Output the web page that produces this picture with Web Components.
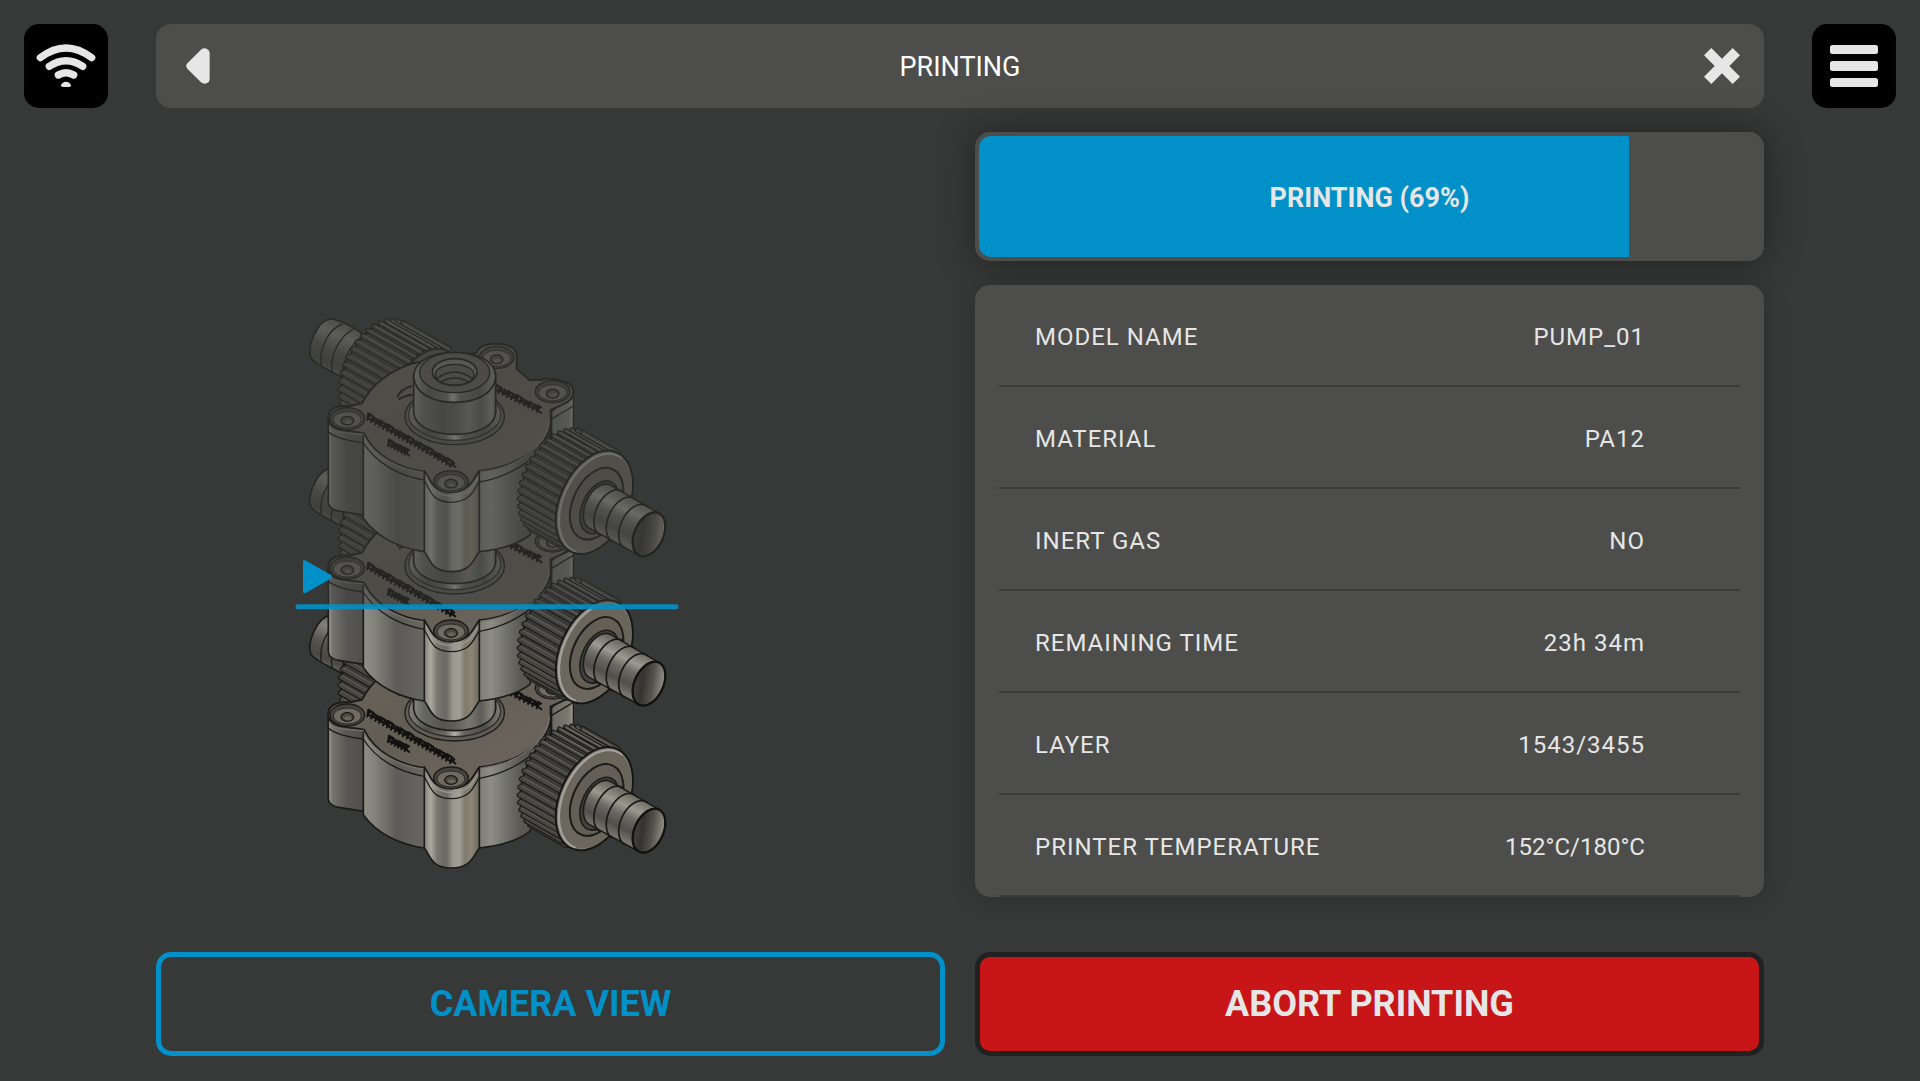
<!DOCTYPE html>
<html lang="en">
<head>
<meta charset="utf-8">
<title>Printing</title>
<style>
  :root {
    --bg: #373938;
    --panel: #4d4d4b;
    --line: #3a3b3a;
    --accent: #0191c8;
    --danger: #c81618;
    --text: #e6e6e6;
    --radius: 15px;
  }
  body { margin: 0; background: var(--bg); color: var(--text); font-family: Roboto, "Liberation Sans", sans-serif; }
</style>
</head>
<body>
<printer-screen>
  <icon-tile slot="left" label="Wi-Fi">
    <svg width="84" height="84" viewBox="0 0 252 252" fill="none" stroke="#e6e6e6" stroke-linecap="round">
      <path d="M49 101Q126 43 203 101" stroke-width="22"/>
      <path d="M76 127Q126 93 176 127" stroke-width="22"/>
      <path d="M103 153Q126 139 149 153" stroke-width="22"/>
      <path d="M111 184q4-11 15-11t15 11q0 5-6 5h-18q-6 0-6-5z" fill="#e6e6e6" stroke="none"/>
    </svg>
  </icon-tile>
  <title-bar slot="title">PRINTING</title-bar>
  <icon-tile slot="right" label="Menu">
    <svg width="84" height="84" viewBox="0 0 84 84" fill="#e6e6e6">
      <rect x="18" y="21" width="48" height="9" rx="2.5"/>
      <rect x="18" y="37" width="48" height="10" rx="2.5"/>
      <rect x="18" y="54" width="48" height="9" rx="2.5"/>
    </svg>
  </icon-tile>
  <model-preview slot="preview"></model-preview>
  <print-progress slot="status" value="69" fill="83.2">PRINTING (69%)</print-progress>
  <info-panel slot="status">
    <info-row label="MODEL NAME">PUMP_01</info-row>
    <info-row label="MATERIAL">PA12</info-row>
    <info-row label="INERT GAS">NO</info-row>
    <info-row label="REMAINING TIME">23h 34m</info-row>
    <info-row label="LAYER">1543/3455</info-row>
    <info-row label="PRINTER TEMPERATURE" compact>152°C/180°C</info-row>
  </info-panel>
  <action-button slot="actions" kind="outline">CAMERA VIEW</action-button>
  <action-button slot="actions" kind="danger">ABORT PRINTING</action-button>
</printer-screen>

<script>
const define = (name, html, setup) => {
  const template = document.createElement('template');
  template.innerHTML = html;
  customElements.define(name, class extends HTMLElement {
    constructor() {
      super();
      this.attachShadow({ mode: 'open' }).append(template.content.cloneNode(true));
    }
    connectedCallback() { if (setup) setup(this, this.shadowRoot); }
  });
};

define('printer-screen', `
  <style>
    :host { display: block; min-height: 100vh; box-sizing: border-box; padding: 24px; }
    header { display: grid; grid-template-columns: 84px 1fr 84px; column-gap: 48px; }
    main { display: grid; grid-template-columns: 1fr 1fr; column-gap: 30px; margin: 24px 132px 0; }
    .status { display: flex; flex-direction: column; gap: 24px; }
    .actions { grid-column: 1 / -1; display: grid; grid-template-columns: 1fr 1fr; column-gap: 30px; margin-top: 55px; }
  </style>
  <header><slot name="left"></slot><slot name="title"></slot><slot name="right"></slot></header>
  <main>
    <slot name="preview"></slot>
    <div class="status"><slot name="status"></slot></div>
    <div class="actions"><slot name="actions"></slot></div>
  </main>`);

define('icon-tile', `
  <style>
    :host { display: block; }
    button { display: block; width: 84px; height: 84px; padding: 0; border: 0; border-radius: var(--radius); background: #000; overflow: hidden; cursor: pointer; }
    ::slotted(svg) { display: block; }
  </style>
  <button type="button"><slot></slot></button>`,
  (el, root) => root.querySelector('button').setAttribute('aria-label', el.getAttribute('label')));

define('title-bar', `
  <style>
    :host { display: flex; align-items: center; justify-content: space-between; height: 84px; box-sizing: border-box; padding: 0 24px; border-radius: var(--radius); background: var(--panel); }
    h1 { margin: 0; padding-top: 2px; font-size: 27px; line-height: 32px; font-weight: 400; color: #fff; }
    button { display: block; width: 36px; height: 36px; padding: 0; border: 0; background: none; cursor: pointer; }
    svg { display: block; }
  </style>
  <button type="button" aria-label="Back"><svg width="36" height="36" viewBox="0 0 108 108" fill="#e6e6e6"><path d="M22 46L63 5Q71-2 80 2Q89 6 89 14V94Q89 102 80 106Q71 110 63 103L22 62Q15 54 22 46Z"/></svg></button>
  <h1><slot></slot></h1>
  <button type="button" aria-label="Close"><svg width="36" height="36" viewBox="0 0 108 108" fill="#e6e6e6"><path d="M22 0L54 32L86 0L108 22L76 54L108 86L86 108L54 76L22 108L0 86L32 54L0 22Z"/></svg></button>`);

define('print-progress', `
  <style>
    :host { display: grid; height: 129px; box-sizing: border-box; padding: 4px; border-radius: var(--radius); background: var(--panel); box-shadow: 0 0 36px rgba(0,0,0,.42); }
    .bar, .label { grid-area: 1 / 1; }
    .bar { border-radius: 12px 0 0 12px; background: var(--accent); }
    .label { place-self: center; padding-top: 2px; font-size: 27px; line-height: 32px; font-weight: 700; }
  </style>
  <div class="bar" role="progressbar" aria-label="Print progress" aria-valuemin="0" aria-valuemax="100"></div>
  <div class="label"><slot></slot></div>`,
  (el, root) => {
    const bar = root.querySelector('.bar');
    bar.setAttribute('aria-valuenow', el.getAttribute('value'));
    bar.style.width = el.getAttribute('fill') + '%';
  });

define('info-panel', `
  <style>
    :host { display: block; padding: 0 24px; border-radius: var(--radius); background: var(--panel); box-shadow: 0 0 24px rgba(0,0,0,.2); }
  </style>
  <slot></slot>`);

define('info-row', `
  <style>
    :host { display: block; }
    dl { display: flex; align-items: center; justify-content: space-between; height: 102px; box-sizing: border-box; margin: 0; padding: 4px 95px 0 36px; border-bottom: 2px solid var(--line); font-size: 24px; line-height: 28px; letter-spacing: 1px; }
    dd { margin: 0; }
    :host([compact]) dd { letter-spacing: normal; }
  </style>
  <dl><dt></dt><dd><slot></slot></dd></dl>`,
  (el, root) => { root.querySelector('dt').textContent = el.getAttribute('label'); });

define('action-button', `
  <style>
    :host { display: block; }
    button { display: block; width: 100%; height: 104px; padding: 0; border: 5px solid var(--accent); border-radius: var(--radius); background: none; color: var(--accent); font: 700 36px/42px Roboto, "Liberation Sans", sans-serif; cursor: pointer; }
    :host([kind=danger]) button { border-color: #212121; background: var(--danger); color: var(--text); }
  </style>
  <button type="button"><slot></slot></button>`);

/* ---- isometric pump drawing ---- */
const U = [0.4226, -0.9063], V = [0.9063, 0.4226];
const onRing = (cx, cy, a, b, deg) => {
  const t = deg * Math.PI / 180, p = a * Math.cos(t), q = b * Math.sin(t);
  return [cx + p * U[0] + q * V[0], cy + p * U[1] + q * V[1]];
};
const arc = (cx, cy, a, b, from, to) => {
  const pts = [];
  for (let i = 0; i <= 32; i++) pts.push(onRing(cx, cy, a, b, from + (to - from) * i / 32).map(n => n.toFixed(1)).join(' '));
  return pts.join('L');
};
const ring = (cx, cy, a, b, attrs) => `<ellipse cx="${cx}" cy="${cy}" rx="${a}" ry="${b}" transform="rotate(-65 ${cx} ${cy})" ${attrs}/>`;
/* ribbed coupling nut: front ring centre, sweep vector to the back ring */
const nut = (cx, cy, dx, dy) => {
  const a = 163, b = 101;
  let s = `<path d="M${arc(cx, cy, a, b, 4, -176)}L${arc(cx + dx, cy + dy, a, b, -176, 4)}Z" fill="#3b3a36" stroke="#151513" stroke-width="5" stroke-linejoin="round"/>`;
  for (let t = -174; t <= 2; t += 9) {
    const [x, y] = onRing(cx, cy, a + 3, b + 3, t + 4), [x2, y2] = onRing(cx, cy, a, b, t + 6);
    const lit = t > -75 ? '#6b6962' : '#605e58';
    s += `<path d="M${x} ${y}l${dx} ${dy}" stroke="#171715" stroke-width="15" stroke-linecap="round"/>`;
    s += `<path d="M${x} ${y}l${dx} ${dy}" stroke="#484640" stroke-width="9" stroke-linecap="round"/>`;
    s += `<path d="M${x2} ${y2}l${dx} ${dy}" stroke="${lit}" stroke-width="4" stroke-linecap="round"/>`;
  }
  return s;
};
const bolt = (x, y) => `
  <ellipse cx="${x}" cy="${y}" rx="52" ry="33" fill="#45433d" stroke="#1b1b19" stroke-width="4"/>
  <ellipse cx="${x}" cy="${y + 3}" rx="42" ry="24" fill="#6f6b60" stroke="#2b2a27" stroke-width="3"/>
  <ellipse cx="${x}" cy="${y + 6}" rx="19" ry="13" fill="#4c4a43" stroke="#191917" stroke-width="4"/>
  <ellipse cx="${x + 2}" cy="${y + 10}" rx="11" ry="6" fill="#68655c"/>`;
/* raised lettering reads as a dark ragged texture at this size */
const emboss = (x1, y1, x2, y2, n) => {
  let d = '';
  for (let i = 0; i < n; i++) {
    const x = x1 + (x2 - x1) * i / (n - 1), y = y1 + (y2 - y1) * i / (n - 1), k = (i * 7) % 5;
    d += `M${x - 8} ${y + 10}l${3 + k}-${20 - k}l${10 - k} ${6 + k}l-${9 - k} 4M${x - 3} ${y + 6 - k}l${9 + k} 7`;
  }
  return `<path d="${d}" fill="none" stroke="#11110f" stroke-width="6" stroke-linejoin="round" stroke-linecap="round"/>`;
};
const pump = `
  <g stroke-linejoin="round">
    <!-- rear hose tail -->
    <path d="M62 172C50 140 82 60 122 57C150 58 190 82 225 106L164 236C130 215 75 195 62 172Z" fill="url(#rearHose)" stroke="#1b1b19" stroke-width="5"/>
    <path d="M94 196C86 150 112 88 158 72M126 218C118 170 145 112 192 86M160 234C152 190 180 130 224 104" fill="none" stroke="#1b1b19" stroke-width="4"/>
    ${nut(405, 295, -138, -78)}
    ${ring(405, 295, 156, 96, 'fill="#57544d" stroke="#1b1b19" stroke-width="4"')}
    ${ring(412, 300, 132, 78, 'fill="#615d54" stroke="#1b1b19" stroke-width="4"')}
    ${ring(420, 306, 118, 66, 'fill="#45433e" stroke="#1b1b19" stroke-width="4"')}
    <!-- right rear leg -->
    <path d="M785 335L850 275V420L785 450Z" fill="url(#rearLeg)" stroke="#1b1b19" stroke-width="4"/>
    <path d="M785 357L850 318" stroke="#1b1b19" stroke-width="4"/>
    <!-- left leg -->
    <path d="M115 350V608Q118 630 150 634L222 645V400Z" fill="url(#leftLeg)" stroke="#1b1b19" stroke-width="5"/>
    <!-- drum -->
    <path d="M220 400V655C260 712 330 745 403 755H568C620 750 680 735 720 705L782 440V345Z" fill="url(#drum)" stroke="#1b1b19" stroke-width="5"/>
    <!-- lid skirt -->
    <path d="M115 358V395Q140 418 220 428C260 492 330 528 403 540M568 546C660 530 760 470 782 398" fill="none" stroke="#1b1b19" stroke-width="4"/>
    <!-- lid -->
    <path d="M115 352C116 326 140 316 180 318L216 310C240 262 290 216 368 190L560 158C566 138 592 131 622 131C656 132 678 145 680 166V206L718 240H752C775 231 850 240 850 272C850 300 838 306 782 330V360C785 430 690 500 568 513C550 535 545 572 483 574C425 572 424 545 403 515C330 506 255 470 222 400L170 392C140 390 114 382 115 352Z" fill="url(#lid)" stroke="#1b1b19" stroke-width="6"/>
    <path d="M222 400C255 462 330 500 403 508M568 506C690 492 770 430 778 350M121 372C135 392 180 388 222 394" fill="none" stroke="#77746a" stroke-width="4" transform="translate(0 10)"/>
    <path d="M322 292Q330 268 366 258M326 298Q345 286 368 284" fill="none" stroke="#1b1b19" stroke-width="6"/>
    ${bolt(620, 172)}${bolt(788, 275)}${bolt(172, 356)}
    ${emboss(240, 350, 488, 490, 22)}${emboss(302, 428, 352, 454, 6)}${emboss(620, 262, 748, 326, 11)}
    <!-- front leg -->
    <path d="M403 512V755C420 775 422 815 483 815C545 815 548 780 568 755V512C550 535 545 574 483 576C425 574 424 545 403 512Z" fill="url(#leg)" stroke="#1b1b19" stroke-width="5"/>
    <path d="M403 542C424 575 425 605 483 607C545 605 550 570 568 544" fill="none" stroke="#1b1b19" stroke-width="4"/>
    <path d="M408 530C426 560 428 586 483 588C540 586 548 558 564 532" fill="none" stroke="#9a9890" stroke-width="4"/>
    ${bolt(483, 545)}
    <!-- spout -->
    <ellipse cx="494" cy="349" rx="149" ry="85" fill="#5f5c55" stroke="#1b1b19" stroke-width="4"/>
    <ellipse cx="494" cy="344" rx="138" ry="77" fill="url(#flange)" stroke="#2c2b28" stroke-width="4"/>
    <path d="M371 220V338C375 380 430 403 494 403S613 380 617 338V220Z" fill="url(#spout)" stroke="#1b1b19" stroke-width="5"/>
    <path d="M371 230C372 180 430 157 494 157S616 180 617 230C614 280 560 307 494 307S374 280 371 230Z" fill="url(#cap)" stroke="#1b1b19" stroke-width="5"/>
    <ellipse cx="494" cy="218" rx="105" ry="60" fill="#605d56" stroke="#1b1b19" stroke-width="4"/>
    <ellipse cx="494" cy="216" rx="67" ry="40" fill="#77756e" stroke="#1b1b19" stroke-width="5"/>
    <ellipse cx="494" cy="224" rx="58" ry="31" fill="#5d5b54" stroke="#1b1b19" stroke-width="4"/>
    <path d="M440 236Q494 196 548 236M452 246Q494 222 536 246" fill="none" stroke="#1b1b19" stroke-width="4"/>
    <!-- front coupling -->
    ${nut(913, 607, -108, -61)}
    ${ring(913, 607, 164, 102, 'fill="#77756e" stroke="#151513" stroke-width="6"')}
    <path d="M${arc(916, 609, 156, 96, 10, -185)}" fill="none" stroke="#a3a19a" stroke-width="7"/>
    ${ring(918, 610, 154, 94, 'fill="url(#face)"')}
    ${ring(920, 611, 114, 71, 'fill="#645f56" stroke="#1b1b19" stroke-width="6"')}
    ${ring(928, 622, 84, 51, 'fill="#45433e" stroke="#1b1b19" stroke-width="5"')}
    <path d="M${arc(930, 620, 72, 44, 5, -175)}L${arc(1077, 703, 70, 43, -175, 5)}Z" fill="url(#hose)" stroke="#1b1b19" stroke-width="5"/>
    <path d="M${arc(963, 639, 74, 45, 8, -178)}M${arc(1000, 660, 73, 45, 8, -178)}M${arc(1037, 681, 72, 45, 8, -178)}" fill="none" stroke="#171715" stroke-width="5"/>
    ${ring(1077, 703, 70, 43, 'fill="url(#bore)" stroke="#11110f" stroke-width="7"')}
  </g>`;
const stops = list => list.map(([o, c]) => `<stop offset="${o}" stop-color="${c}"/>`).join('');
const flat = (id, x1, x2, list) => `<linearGradient id="${id}" gradientUnits="userSpaceOnUse" x1="${x1}" x2="${x2}" y1="0" y2="0">${stops(list)}</linearGradient>`;

define('model-preview', `
  <style>
    :host { display: flex; align-items: flex-end; box-sizing: border-box; padding: 0 0 27px 134px; }
    svg { display: block; width: 390px; height: 570px; }
  </style>
  <svg viewBox="0 0 1170 1710" role="img" aria-label="Three stacked pump models with the current layer marked">
    <defs>
      ${flat('drum', 220, 782, [[0, '#8f8e86'], [.06, '#83827b'], [.18, '#5c5b57'], [.33, '#686762'], [.62, '#7d7d77'], [.68, '#8d8d86'], [.76, '#73736d'], [.84, '#5a5954'], [1, '#504f4a']])}
      ${flat('leg', 403, 568, [[0, '#85847d'], [.12, '#aaa89f'], [.24, '#77766f'], [.4, '#696863'], [.52, '#99988f'], [.64, '#a19f95'], [.74, '#7f7a6d'], [.86, '#8d8475'], [1, '#6e6a60']])}
      ${flat('leftLeg', 115, 222, [[0, '#a09f97'], [.12, '#74736d'], [.5, '#595854'], [1, '#4f4e4a']])}
      ${flat('rearLeg', 785, 850, [[0, '#6b6a63'], [.8, '#7b7971'], [1, '#a5a297']])}
      ${flat('spout', 371, 617, [[0, '#858580'], [.12, '#686863'], [.35, '#55544f'], [.5, '#5f5e59'], [.68, '#77776f'], [.82, '#5e5d58'], [.95, '#858379'], [1, '#66645d']])}
      ${flat('cap', 371, 617, [[0, '#8c8b84'], [.2, '#55544f'], [.4, '#6b6a64'], [.48, '#aaa9a4'], [.56, '#6b6a64'], [.8, '#55544f'], [1, '#89867b']])}
      ${flat('flange', 356, 632, [[0, '#85847c'], [.2, '#4f4e49'], [.4, '#66655f'], [.5, '#b0afaa'], [.6, '#66655f'], [.82, '#504e49'], [1, '#7d7b72']])}
      <linearGradient id="lid" x1="0" y1="0" x2="1" y2="1">${stops([[0, '#6b665b'], [.45, '#625e54'], [.75, '#6a635b'], [1, '#5c5850']])}</linearGradient>
      <linearGradient id="face" x1="0" y1="0" x2="1" y2="0">${stops([[0, '#6d685e'], [1, '#6a655b']])}</linearGradient>
      <linearGradient id="hose" gradientUnits="userSpaceOnUse" x1="1020" y1="590" x2="950" y2="735">${stops([[0, '#6a675e'], [.25, '#9b9a90'], [.42, '#6b6a63'], [.65, '#504f4a'], [.85, '#77756c'], [1, '#5c5a53']])}</linearGradient>
      <linearGradient id="rearHose" gradientUnits="userSpaceOnUse" x1="170" y1="70" x2="105" y2="220">${stops([[0, '#5f5c53'], [.25, '#83817a'], [.55, '#55544f'], [.8, '#484742'], [1, '#6d6b63']])}</linearGradient>
      <linearGradient id="bore" gradientUnits="userSpaceOnUse" x1="1060" y1="650" x2="1095" y2="765">${stops([[0, '#4a4843'], [.3, '#35332f'], [.55, '#55524c'], [.8, '#8b8980'], [1, '#77756d']])}</linearGradient>
      <g id="pump">${pump}</g>
    </defs>
    <use href="#pump" y="889"/>
    <use href="#pump" y="448"/>
    <use href="#pump"/>
    <rect width="1170" height="920" fill="#373938" opacity=".5"/>
    <path d="M39 786Q39 777 48 782L122 824Q130 830 122 836L48 878Q39 883 39 874Z" fill="#0191c8"/>
    <path d="M24 920H1158" stroke="#0191c8" stroke-width="15" stroke-linecap="round" opacity=".9"/>
  </svg>`);
</script>
</body>
</html>
